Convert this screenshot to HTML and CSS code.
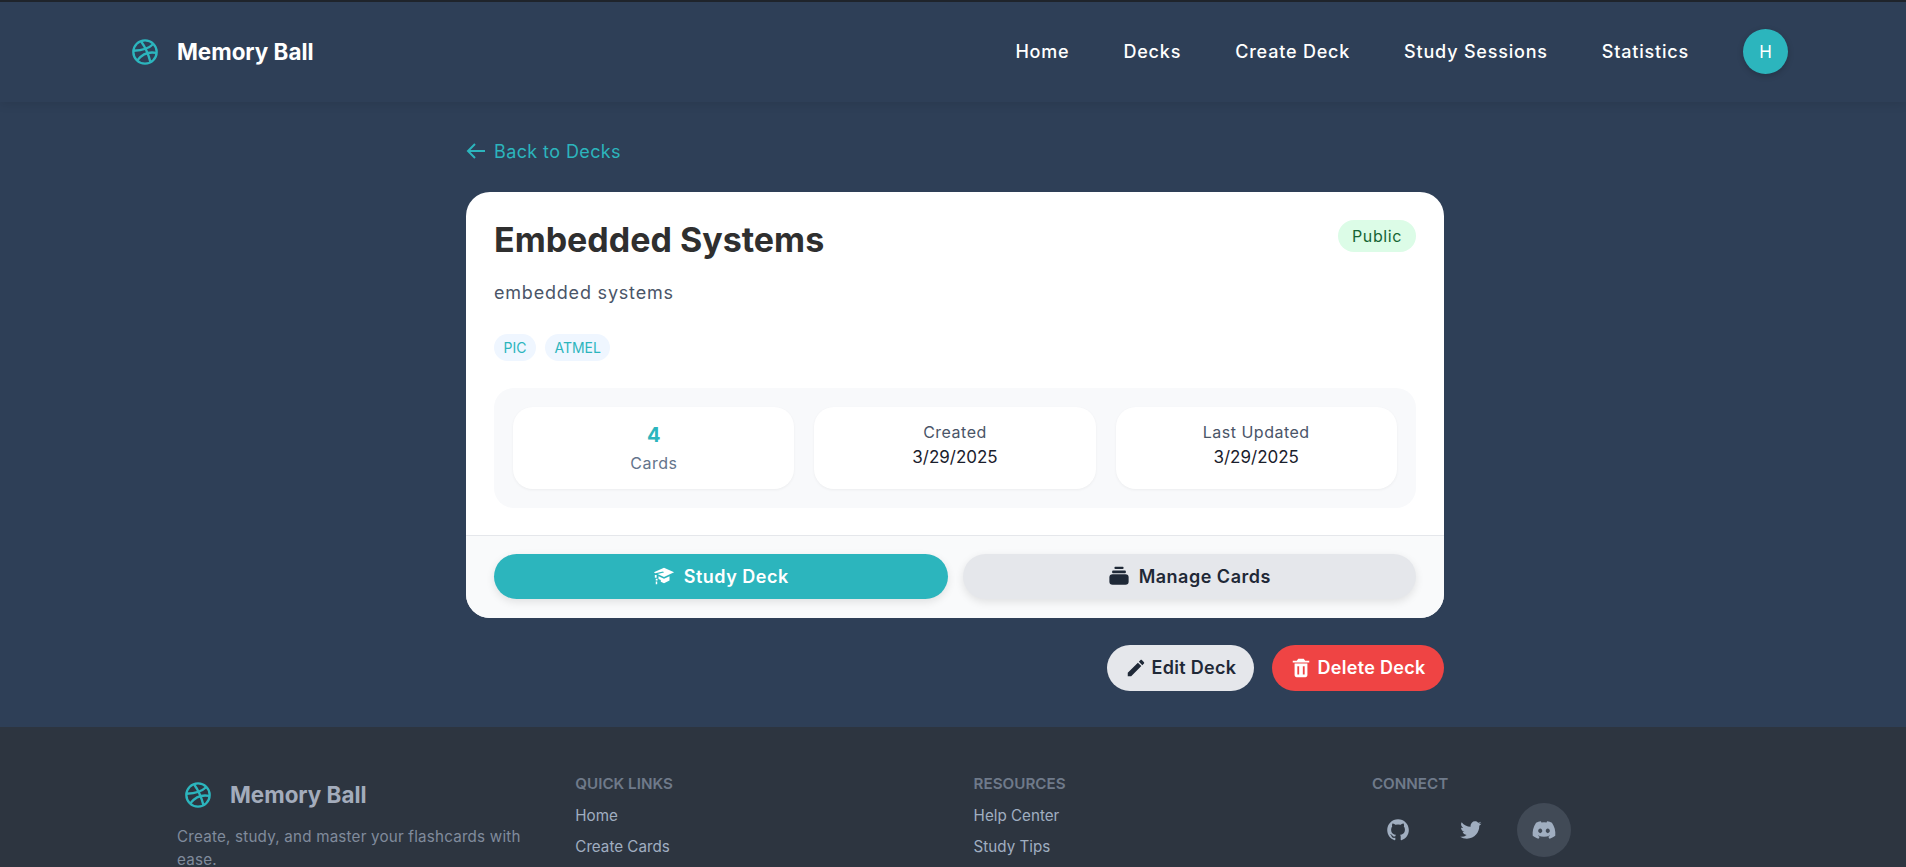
FILE: index.html
```html
<!DOCTYPE html>
<html lang="en">
<head>
    <meta charset="UTF-8">
    <meta name="viewport" content="width=device-width, initial-scale=1.0">
    <title>Memory Ball</title>
    <link rel="stylesheet" href="styles.css">
</head>
<body>
    <header class="navbar">
        <a class="brand" href="#">
            <svg class="brand-icon" viewBox="0 0 24 24"><circle cx="12" cy="12" r="10"/><path d="M19.13 5.09C15.22 9.14 10 10.44 2.25 10.94"/><path d="M21.75 12.84c-6.62-1.41-12.14 1-16.38 6.32"/><path d="M8.56 2.75c4.37 6 6 9.42 8 17.72"/></svg>
            <span>Memory Ball</span>
        </a>
        <nav class="nav-links">
            <a href="#">Home</a>
            <a href="#">Decks</a>
            <a href="#">Create Deck</a>
            <a href="#">Study Sessions</a>
            <a href="#">Statistics</a>
            <span class="avatar">H</span>
        </nav>
    </header>

    <main class="page">
        <div class="deck-wrap">
            <a class="back-link" href="#">
                <svg viewBox="0 0 24 24"><path d="M21 12H4M11 5l-7 7 7 7"/></svg>
                Back to Decks
            </a>

            <section class="deck-card">
                <div class="deck-body">
                    <div class="deck-head">
                        <h1>Embedded Systems</h1>
                        <span class="badge-public">Public</span>
                    </div>
                    <p class="deck-desc">embedded systems</p>
                    <div class="tags">
                        <span class="tag">PIC</span>
                        <span class="tag">ATMEL</span>
                    </div>
                    <div class="stats">
                        <div class="stat stat-main">
                            <strong class="stat-count">4</strong>
                            <span class="stat-label stat-label-low">Cards</span>
                        </div>
                        <div class="stat">
                            <span class="stat-label">Created</span>
                            <span class="stat-value">3/29/2025</span>
                        </div>
                        <div class="stat">
                            <span class="stat-label">Last Updated</span>
                            <span class="stat-value">3/29/2025</span>
                        </div>
                    </div>
                </div>
                <div class="deck-foot">
                    <button class="btn btn-wide btn-teal">
                        <svg viewBox="0 0 24 24"><path d="M12 3 23 8l-11 5-7-3.2 7-1.6-1-1.2-8.5 2L1 8z"/><path d="M6 12.2 12 15l6-2.7V17l-6 3-3.5-1.6v-2L6 15.2z"/><path d="M2 11h2v3H2zM3 15h2v2H3zM3 18h1.6v3H3z"/></svg>
                        Study Deck
                    </button>
                    <button class="btn btn-wide btn-grey">
                        <svg viewBox="0 0 24 24"><rect x="7" y="2" width="10" height="2.4" rx="1"/><rect x="4.5" y="6" width="15" height="3" rx="1"/><rect x="1.5" y="10" width="21" height="11.5" rx="3.5"/></svg>
                        Manage Cards
                    </button>
                </div>
            </section>

            <div class="deck-actions">
                <button class="btn btn-small btn-light">
                    <svg viewBox="0 0 24 24"><path d="M3 17.25V21h3.75L17.81 9.94l-3.75-3.75L3 17.25zM20.71 7.04c.39-.39.39-1.02 0-1.41l-2.34-2.34c-.39-.39-1.02-.39-1.41 0l-1.83 1.83 3.75 3.75 1.83-1.83z"/></svg>
                    Edit Deck
                </button>
                <button class="btn btn-small btn-red">
                    <svg viewBox="0 0 24 24"><path d="M6 7H5v13a2 2 0 0 0 2 2h10a2 2 0 0 0 2-2V7H6zm4 12H8v-9h2v9zm6 0h-2v-9h2v9zm.618-15L15 2H9L7.382 4H3v2h18V4z"/></svg>
                    Delete Deck
                </button>
            </div>
        </div>
    </main>

    <footer class="footer">
        <div class="footer-col">
            <a class="footer-brand" href="#">
                <svg class="brand-icon" viewBox="0 0 24 24"><circle cx="12" cy="12" r="10"/><path d="M19.13 5.09C15.22 9.14 10 10.44 2.25 10.94"/><path d="M21.75 12.84c-6.62-1.41-12.14 1-16.38 6.32"/><path d="M8.56 2.75c4.37 6 6 9.42 8 17.72"/></svg>
                <span>Memory Ball</span>
            </a>
            <p class="footer-text">Create, study, and master your flashcards with ease.</p>
        </div>
        <div class="footer-col">
            <h4>Quick Links</h4>
            <a class="footer-link" href="#">Home</a>
            <a class="footer-link" href="#">Create Cards</a>
        </div>
        <div class="footer-col">
            <h4>Resources</h4>
            <a class="footer-link" href="#">Help Center</a>
            <a class="footer-link" href="#">Study Tips</a>
        </div>
        <div class="footer-col">
            <h4>Connect</h4>
            <div class="socials">
                <a class="social" href="#"><svg viewBox="0 0 24 24"><path d="M12.026 2c-5.509 0-9.974 4.465-9.974 9.974 0 4.406 2.857 8.145 6.821 9.465.499.09.679-.217.679-.481 0-.237-.008-.865-.011-1.696-2.775.602-3.361-1.338-3.361-1.338-.452-1.152-1.107-1.459-1.107-1.459-.905-.619.069-.605.069-.605 1.002.07 1.527 1.028 1.527 1.028.89 1.524 2.336 1.084 2.902.829.091-.645.351-1.085.635-1.334-2.214-.251-4.542-1.107-4.542-4.93 0-1.087.389-1.979 1.024-2.675-.101-.253-.446-1.268.099-2.64 0 0 .837-.269 2.742 1.021a9.582 9.582 0 0 1 2.496-.336 9.554 9.554 0 0 1 2.496.336c1.906-1.291 2.742-1.021 2.742-1.021.545 1.372.203 2.387.099 2.64.64.696 1.024 1.587 1.024 2.675 0 3.833-2.33 4.675-4.552 4.922.355.308.675.916.675 1.846 0 1.334-.012 2.41-.012 2.737 0 .267.178.577.687.479C19.146 20.115 22 16.379 22 11.974 22 6.465 17.535 2 12.026 2z"/></svg></a>
                <a class="social" href="#"><svg viewBox="0 0 24 24"><path d="M19.633 7.997c.013.175.013.349.013.523 0 5.325-4.053 11.461-11.46 11.461-2.282 0-4.402-.661-6.186-1.809.324.037.636.05.973.05a8.07 8.07 0 0 0 5.001-1.721 4.036 4.036 0 0 1-3.767-2.793c.249.037.499.062.761.062.361 0 .724-.05 1.061-.137a4.027 4.027 0 0 1-3.23-3.953v-.05c.537.299 1.16.486 1.82.511a4.022 4.022 0 0 1-1.796-3.354c0-.748.199-1.434.548-2.032a11.457 11.457 0 0 0 8.306 4.215c-.062-.3-.1-.611-.1-.923a4.026 4.026 0 0 1 4.028-4.028c1.16 0 2.207.486 2.943 1.272a7.957 7.957 0 0 0 2.556-.973 4.02 4.02 0 0 1-1.771 2.22 8.073 8.073 0 0 0 2.319-.624 8.645 8.645 0 0 1-2.019 2.083z"/></svg></a>
                <a class="social social-hover" href="#"><svg viewBox="0 0 24 24"><path d="M19.27 5.33C17.94 4.71 16.5 4.26 15 4a.09.09 0 0 0-.07.03c-.18.33-.39.76-.53 1.09a16.09 16.09 0 0 0-4.8 0c-.14-.34-.35-.76-.54-1.09-.01-.02-.04-.03-.07-.03-1.5.26-2.93.71-4.27 1.33-.01 0-.02.01-.03.02-2.72 4.07-3.47 8.03-3.1 11.95 0 .02.01.04.03.05 1.8 1.32 3.53 2.12 5.24 2.65.03.01.06 0 .07-.02.4-.55.76-1.13 1.07-1.74.02-.04 0-.08-.04-.09-.57-.22-1.11-.48-1.64-.78-.04-.02-.04-.08-.01-.11.11-.08.22-.17.33-.25.02-.02.05-.02.07-.01 3.44 1.57 7.15 1.57 10.55 0 .02-.01.05-.01.07.01.11.09.22.17.33.26.04.03.04.09-.01.11-.52.31-1.07.56-1.64.78-.04.01-.05.06-.04.09.32.61.68 1.19 1.07 1.74.03.01.06.02.09.01 1.72-.53 3.45-1.33 5.25-2.65.02-.01.03-.03.03-.05.44-4.53-.73-8.46-3.1-11.95-.01-.01-.02-.02-.04-.02zM8.52 14.91c-1.03 0-1.89-.95-1.89-2.12s.84-2.12 1.89-2.12c1.06 0 1.9.96 1.89 2.12 0 1.17-.84 2.12-1.89 2.12zm6.97 0c-1.03 0-1.89-.95-1.89-2.12s.84-2.12 1.89-2.12c1.06 0 1.9.96 1.89 2.12 0 1.17-.83 2.12-1.89 2.12z"/></svg></a>
            </div>
        </div>
    </footer>
</body>
</html>
```

FILE: styles.css
```css
* {
    box-sizing: border-box;
}

html,
body {
    height: 100%;
    margin: 0;
    overflow: hidden;
}

body {
    background-color: #2e3f57;
    font-family: Inter, "Liberation Sans", sans-serif;
    border-top: 2px solid #1f242b;
}

a {
    color: inherit;
    text-decoration: none;
}

/* top bar */
.navbar {
    position: relative;
    z-index: 2;
    height: 100px;
    padding: 0 118px 1px 131px;
    display: flex;
    align-items: center;
    justify-content: space-between;
    background-color: #2e3f57;
    box-shadow: 0 2px 10px rgba(0, 0, 0, 0.1);
}

.brand {
    display: flex;
    align-items: center;
    gap: 18px;
    color: #fff;
    font-size: 22.4px;
    font-weight: 700;
}

.brand-icon {
    width: 28px;
    height: 28px;
    fill: none;
    stroke: #2cb5bd;
    stroke-width: 2;
}

.nav-links {
    display: flex;
    align-items: center;
    gap: 54px;
    color: #fff;
    font-size: 18px;
    font-weight: 500;
    letter-spacing: 0.8px;
}

.avatar {
    width: 45px;
    height: 45px;
    border-radius: 50%;
    display: flex;
    align-items: center;
    justify-content: center;
    background-color: #2cb5bd;
    box-shadow: 0 2px 6px rgba(0, 0, 0, 0.2);
    font-size: 17px;
    font-weight: 400;
    letter-spacing: 0;
}

/* deck page */
.page {
    padding: 40px 0 36px 4px;
}

.deck-wrap {
    width: 978px;
    margin: 0 auto;
}

.back-link {
    display: inline-flex;
    align-items: center;
    gap: 6px;
    height: 20px;
    padding-bottom: 2px;
    margin-bottom: 30px;
    margin-left: -2px;
    color: #2cb5bd;
    font-size: 18px;
    letter-spacing: 0.4px;
}

.back-link svg {
    width: 24px;
    height: 24px;
    fill: none;
    stroke: currentColor;
    stroke-width: 2;
}

.deck-card {
    border-radius: 24px;
    overflow: hidden;
    background-color: #fff;
}

.deck-body {
    padding: 28px 28px 27px;
}

.deck-head {
    display: flex;
    justify-content: space-between;
    align-items: flex-start;
}

.deck-head h1 {
    margin: 0;
    font-size: 34px;
    line-height: 40px;
    font-weight: 700;
    color: #2f2f2f;
}

.badge-public {
    height: 32px;
    padding: 0 14px;
    border-radius: 16px;
    line-height: 32px;
    font-size: 16px;
    letter-spacing: 0.6px;
    background-color: #dcfce7;
    color: #166534;
}

.deck-desc {
    margin: 22px 0 0;
    line-height: 22px;
    font-size: 18px;
    letter-spacing: 0.8px;
    color: #4a5568;
}

.tags {
    display: flex;
    gap: 9px;
    margin-top: 30px;
}

.tag {
    height: 27px;
    padding: 0 9.5px;
    border-radius: 14px;
    line-height: 27px;
    font-size: 14px;
    background-color: #eff6ff;
    color: #2cb5bd;
}

.stats {
    display: grid;
    grid-template-columns: repeat(3, 1fr);
    gap: 20px;
    margin-top: 27px;
    padding: 19.2px;
    border-radius: 20px;
    background-color: #f8f9fb;
}

.stat {
    height: 81.6px;
    padding-bottom: 5px;
    border-radius: 20px;
    display: flex;
    flex-direction: column;
    align-items: center;
    justify-content: center;
    gap: 4px;
    background-color: #fff;
    box-shadow: 0 1px 3px rgba(0, 0, 0, 0.05);
}

.stat-main {
    padding-bottom: 0;
    gap: 6px;
}

.stat-count {
    font-size: 20px;
    line-height: 24px;
    color: #2cb5bd;
}

.stat-label {
    font-size: 16px;
    line-height: 20px;
    letter-spacing: 0.5px;
    color: #4a5568;
}

.stat-label-low {
    color: #64748b;
}

.stat-value {
    font-size: 17px;
    line-height: 22px;
    color: #1a202c;
}

.deck-foot {
    display: grid;
    grid-template-columns: 1fr 1fr;
    gap: 15px;
    padding: 18px 28px 19px;
    border-top: 1px solid #e5e7eb;
    background-color: #f9fafb;
}

.btn {
    display: flex;
    align-items: center;
    justify-content: center;
    border: 0;
    font-family: inherit;
    font-size: 18px;
    font-weight: 600;
}

.btn svg {
    fill: currentColor;
}

.btn-wide {
    height: 45px;
    gap: 9px;
    border-radius: 23px;
    letter-spacing: 0.5px;
    box-shadow: 0 3px 8px rgba(0, 0, 0, 0.1);
}

.btn-wide svg {
    width: 22px;
    height: 22px;
}

.btn-teal {
    background-color: #2cb5bd;
    color: #fff;
}

.btn-grey,
.btn-light {
    background-color: #e5e7eb;
    color: #1f2937;
}

.deck-actions {
    display: flex;
    justify-content: flex-end;
    gap: 18px;
    margin-top: 27px;
}

.btn-small {
    height: 46px;
    gap: 5px;
    border-radius: 23px;
    letter-spacing: 0.3px;
}

.btn-small svg {
    width: 22px;
    height: 22px;
}

.btn-light {
    width: 147px;
}

.btn-red {
    width: 172px;
    background-color: #ef4444;
    color: #fff;
}

/* footer */
.footer {
    height: 400px;
    padding: 48px 0 0 177px;
    display: grid;
    grid-template-columns: repeat(4, 350px);
    column-gap: 48.3px;
    background-color: #2d3540;
    color: #a0aec0;
}

.footer h4 {
    margin: 0 0 13px;
    font-size: 15.2px;
    line-height: 18px;
    font-weight: 600;
    text-transform: uppercase;
    color: #6f7a8a;
}

.footer-brand {
    display: flex;
    align-items: center;
    gap: 18px;
    margin: 6px 0 0 7px;
    color: #a3acbc;
    font-size: 22.4px;
    font-weight: 700;
}

.footer-text {
    margin: 16px 0 0;
    font-size: 15.2px;
    line-height: 23px;
    letter-spacing: 0.2px;
    color: #808b9c;
}

.footer-link {
    display: block;
    height: 31px;
    line-height: 20px;
    font-size: 15.2px;
}

.socials {
    display: flex;
    gap: 19px;
    margin: -3px 0 0 -1px;
}

.social {
    width: 54px;
    height: 54px;
    border-radius: 50%;
    display: flex;
    align-items: center;
    justify-content: center;
    color: #a0aec0;
}

.social svg {
    width: 26px;
    height: 26px;
    fill: currentColor;
}

.social-hover {
    background-color: #414a56;
}
```
